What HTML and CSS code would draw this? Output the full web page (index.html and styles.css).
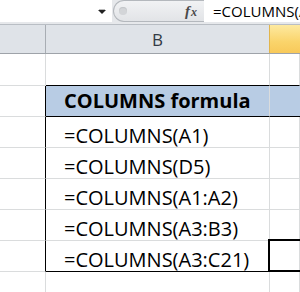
FILE: index.html
```
<!DOCTYPE html>
<html>
<head>
<meta charset="utf-8">
<link rel="stylesheet" href="styles.css">
</head>
<body>
<div class="sheet">
  <div class="toolbar">
    <div class="namebox">
      <svg class="arrow" width="8" height="6" viewBox="0 0 8 6"><path d="M0 1h8L4 5z" fill="#222"/><path d="M1 0h6" stroke="#777" stroke-width="1"/></svg>
    </div>
    <div class="splitter">
      <span class="knob"></span>
      <span class="fx">f<span class="fx-x">x</span></span>
    </div>
    <div class="formula">=COLUMNS(A3:C21)</div>
  </div>
  <div class="colheader">
    <div class="hcell hcell-a"></div>
    <div class="hcell hcell-b">B</div>
    <div class="hcell hcell-c"></div>
  </div>
  <div class="row row-first">
    <div class="cell a"></div>
    <div class="cell b dark-bottom"></div>
    <div class="cell c dark-bottom"></div>
  </div>
  <div class="row row-title">
    <div class="cell a dark-right"></div>
    <div class="cell b title dark-bottom">COLUMNS formula</div>
    <div class="cell c title dark-bottom"></div>
  </div>
  <div class="row">
    <div class="cell a dark-right"></div>
    <div class="cell b">=COLUMNS(A1)</div>
    <div class="cell c"></div>
  </div>
  <div class="row">
    <div class="cell a dark-right"></div>
    <div class="cell b">=COLUMNS(D5)</div>
    <div class="cell c"></div>
  </div>
  <div class="row">
    <div class="cell a dark-right"></div>
    <div class="cell b">=COLUMNS(A1:A2)</div>
    <div class="cell c"></div>
  </div>
  <div class="row">
    <div class="cell a dark-right"></div>
    <div class="cell b">=COLUMNS(A3:B3)</div>
    <div class="cell c"></div>
  </div>
  <div class="row row-last">
    <div class="cell a dark-right"></div>
    <div class="cell b dark-bottom">=COLUMNS(A3:C21)</div>
    <div class="cell c selected"></div>
  </div>
  <div class="row">
    <div class="cell a"></div>
    <div class="cell b"></div>
    <div class="cell c"></div>
  </div>
</div>
</body>
</html>
```
FILE: styles.css
```
html, body {
  margin: 0;
  padding: 0;
  background: #fff;
}
.sheet {
  width: 300px;
  height: 292px;
  overflow: hidden;
  font-family: "Open Sans", Lato, sans-serif;
  color: #000;
}
.toolbar {
  display: flex;
  height: 24px;
  background: #e6e8eb;
  border-bottom: 1px solid #b9bec4;
}
.namebox {
  width: 112px;
  height: 22px;
  background: #fff;
  display: flex;
  align-items: center;
  justify-content: flex-end;
  padding-right: 6px;
  box-sizing: border-box;
}
.arrow {
  display: block;
  margin-top: 2px;
}
.splitter {
  width: 91px;
  height: 22px;
  box-sizing: border-box;
  margin-left: 1px;
  border: 1px solid #b4b8bd;
  border-right: none;
  border-radius: 11px 0 0 11px;
  background: linear-gradient(#f1f2f4, #e2e4e7);
  display: flex;
  align-items: center;
}
.knob {
  width: 8px;
  height: 8px;
  border-radius: 50%;
  background: #d3d5d8;
  margin-left: 5px;
  box-shadow: inset 0 1px 1px #c2c4c7;
}
.fx {
  margin-left: auto;
  margin-right: 7px;
  font-family: "Liberation Serif", serif;
  font-style: italic;
  font-weight: bold;
  font-size: 15px;
  color: #4a4a4a;
  line-height: 1;
}
.fx-x {
  font-size: 12px;
  margin-left: 1px;
}
.formula {
  flex: 1;
  height: 22px;
  background: #fff;
  padding-left: 9px;
  font-size: 15px;
  line-height: 22px;
  white-space: nowrap;
  overflow: hidden;
}
.colheader {
  display: grid;
  grid-template-columns: 46px 224px 1fr;
  height: 29px;
  box-sizing: border-box;
  border-bottom: 1px solid #9ea3a9;
  background: #dfe3e8;
}
.hcell {
  box-sizing: border-box;
  display: flex;
  align-items: center;
  justify-content: center;
  font-size: 17px;
  color: #333a44;
  padding-top: 1px;
}
.hcell-a, .hcell-b {
  border-right: 1px solid #a8adb3;
}
.hcell-c {
  background: linear-gradient(#fde9a0, #fad46b 60%, #f8c95a);
  border-left: 1px solid #e2b54c;
  margin-left: -1px;
}
.row {
  display: grid;
  grid-template-columns: 46px 224px 1fr;
  height: 31px;
}
.row-first {
  height: 32px;
}
.cell {
  box-sizing: border-box;
  border-right: 1px solid #dadcdd;
  border-bottom: 1px solid #dadcdd;
  font-size: 20px;
  line-height: 1;
  display: flex;
  align-items: flex-end;
  padding-left: 18px;
  padding-bottom: 1px;
  white-space: nowrap;
}
.cell.a {
  padding: 0;
}
.dark-right {
  border-right-color: #000;
}
.dark-bottom {
  border-bottom-color: #000;
}
.title {
  background: #b8cce4;
  font-weight: bold;
  font-size: 20px;
  align-items: center;
  padding-bottom: 1px;
}
.cell.c.title {
  border-right: none;
}
.selected {
  position: relative;
}
.selected::after {
  content: "";
  position: absolute;
  left: -2px;
  top: -2px;
  right: -4px;
  bottom: -1px;
  border: 2px solid #000;
}
```
